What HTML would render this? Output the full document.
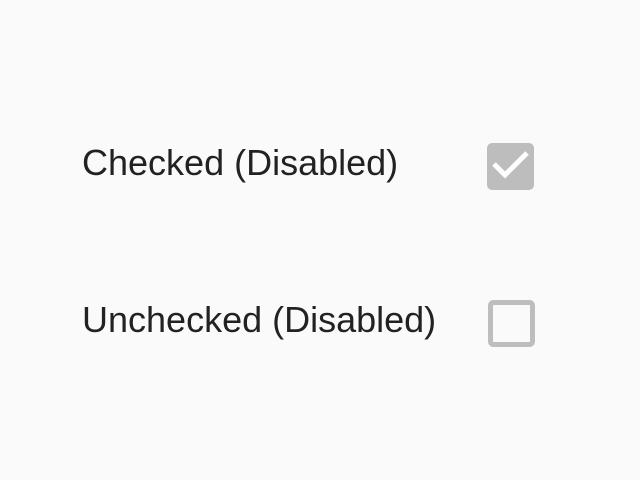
<!DOCTYPE html>
<html><head><style>
body{margin:0;width:640px;height:480px;background:#fafafa;position:relative;font-family:"Liberation Sans",sans-serif;color:#222;overflow:hidden}
.t{position:absolute;left:82px;font-size:36px;line-height:36px;white-space:nowrap}
</style></head><body>
<div class="t" style="top:145px">Checked (Disabled)</div>
<div class="t" style="top:302px">Unchecked (Disabled)</div>
<svg style="position:absolute;left:0;top:0" width="640" height="480">
<rect x="487" y="143" width="47" height="47" rx="5" fill="#bdbdbd"/>
<path d="M494 164 L505 175 L527 153" stroke="#fff" stroke-width="5" fill="none"/>
<rect x="490.5" y="302.5" width="42" height="42" rx="3" fill="none" stroke="#bdbdbd" stroke-width="5"/>
</svg>
</body></html>
